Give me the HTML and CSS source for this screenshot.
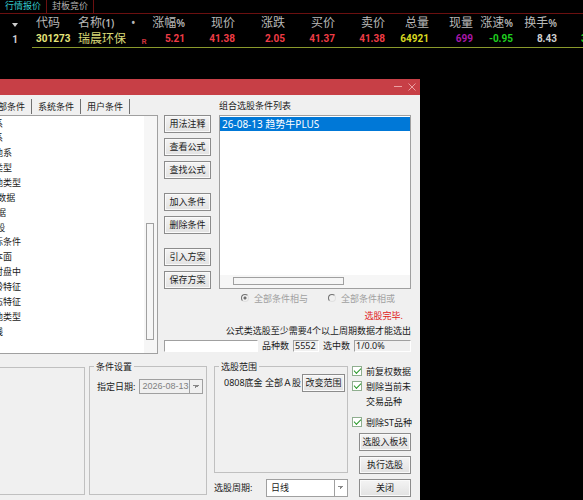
FILE: index.html
```html
<!DOCTYPE html>
<html lang="zh-CN">
<head>
  <meta charset="UTF-8" />
  <meta name="viewport" content="width=device-width, initial-scale=1.0" />
  <title>条件选股</title>
  <link rel="stylesheet" href="styles.css">
</head>
<body>
  <nav class="market-tabs">
    <a class="active" href="#">行情报价</a>
    <a href="#">封板竞价</a>
  </nav>

  <div class="quotes-wrap">
    <table class="quotes">
      <colgroup>
        <col class="c-gap"><col class="c-code"><col class="c-name"><col class="c-mark"><col class="c-pct">
        <col class="c-price"><col class="c-price"><col class="c-price"><col class="c-price">
        <col class="c-vol"><col class="c-vol"><col class="c-rate"><col class="c-vol"><col>
      </colgroup>
      <thead>
        <tr>
          <th class="idx"><svg width="6" height="4" viewBox="0 0 6 4"><path d="M0 0h6L3 4z" fill="#ccc"/></svg></th>
          <th class="left code">代码</th>
          <th class="left">名称<small>(1)</small></th>
          <th class="left">•</th>
          <th>涨幅<small>%</small></th>
          <th>现价</th>
          <th>涨跌</th>
          <th>买价</th>
          <th>卖价</th>
          <th>总量</th>
          <th>现量</th>
          <th>涨速<small>%</small></th>
          <th>换手<small>%</small></th>
          <th></th>
        </tr>
      </thead>
      <tbody>
        <tr>
          <td class="idx">1</td>
          <td class="left code yellow">301273</td>
          <td class="left name">瑞晨环保</td>
          <td class="mark">R</td>
          <td class="up">5.21</td>
          <td class="up">41.38</td>
          <td class="up">2.05</td>
          <td class="up">41.37</td>
          <td class="up">41.38</td>
          <td class="vol">64921</td>
          <td class="now">699</td>
          <td class="down">-0.95</td>
          <td>8.43</td>
          <td class="next down">3.27</td>
        </tr>
      </tbody>
    </table>
  </div>

  <main class="dialog">
    <header class="titlebar">
      <button type="button" aria-label="最小化"><svg width="8" height="8" viewBox="0 0 8 8"><path d="M0 3.5h8" stroke="#eba0a3"/></svg></button>
      <button type="button" aria-label="关闭窗口"><svg width="8" height="8" viewBox="0 0 8 8"><path d="M.5.5l7 7m0-7l-7 7" stroke="#eba0a3"/></svg></button>
    </header>

    <div class="upper">
      <section class="tree-pane">
        <div class="tabs">
          <button type="button">全部条件</button>
          <button type="button">系统条件</button>
          <button type="button">用户条件</button>
        </div>
        <div class="tree">
          <ul>
            <li>均系</li>
            <li>量系</li>
            <li>其他系</li>
            <li>形类型</li>
            <li>其他类型</li>
            <li>L2 数据</li>
            <li>I数据</li>
            <li>选 股</li>
            <li>指标条件</li>
            <li>基本面</li>
            <li>即时盘中</li>
            <li>年龄特征</li>
            <li>形态特征</li>
            <li>其他类型</li>
            <li>画线</li>
          </ul>
          <div class="track"><span class="thumb"></span></div>
        </div>
      </section>

      <section class="work-pane">
        <div class="work">
          <div class="actions">
            <div class="group">
              <button class="btn" type="button">用法注释</button>
              <button class="btn" type="button">查看公式</button>
              <button class="btn" type="button">查找公式</button>
            </div>
            <div class="group">
              <button class="btn" type="button">加入条件</button>
              <button class="btn" type="button">删除条件</button>
            </div>
            <div class="group">
              <button class="btn" type="button">引入方案</button>
              <button class="btn" type="button">保存方案</button>
            </div>
          </div>
          <div class="combo">
            <h2>组合选股条件列表</h2>
            <div class="combo-list">
              <ul>
                <li>26-08-13 趋势牛PLUS</li>
              </ul>
              <div class="track-h"><span class="thumb-h"></span></div>
            </div>
          </div>
        </div>
        <div class="radios">
          <label><input type="radio" name="logic" checked disabled>全部条件相与</label>
          <label><input type="radio" name="logic" disabled>全部条件相或</label>
        </div>
        <p class="done">选股完毕.</p>
        <p class="hint">公式类选股至少需要4个以上周期数据才能选出</p>
        <div class="counts">
          <input class="search" type="text" aria-label="条件">
          <label for="total">品种数</label>
          <input class="num" id="total" type="text" value="5552" readonly>
          <label for="hits">选中数</label>
          <input class="num wide" id="hits" type="text" value="1/0.0%" readonly>
        </div>
      </section>
    </div>

    <div class="lower">
      <div class="box blank"></div>
      <fieldset class="box settings">
        <legend>条件设置</legend>
        <div class="date-row">
          <label for="date">指定日期:</label>
          <select id="date" disabled><option>2026-08-13</option></select>
        </div>
      </fieldset>
      <div class="range-col">
        <fieldset class="box range">
          <legend>选股范围</legend>
          <div class="range-row">
            <span>0808底金 全部Ａ股</span>
            <button class="btn" type="button">改变范围</button>
          </div>
        </fieldset>
        <div class="period">
          <label for="period">选股周期:</label>
          <select id="period"><option>日线</option></select>
        </div>
      </div>
      <div class="options">
        <label><input type="checkbox" checked>前复权数据</label>
        <label><input type="checkbox" checked>剔除当前未<br>交易品种</label>
        <label class="st"><input type="checkbox" checked>剔除ST品种</label>
        <div class="group">
          <button class="btn" type="button">选股入板块</button>
          <button class="btn" type="button">执行选股</button>
          <button class="btn" type="button">关闭</button>
        </div>
      </div>
    </div>
  </main>
</body>
</html>
```
FILE: styles.css
```css
:root {
  --ui: "Noto Sans", "Noto Sans CJK SC", sans-serif;
  --face: #f0f0f0;
  --line: #a0a0a0;
  --line-soft: #c0c0c0;
  --title: #c73f46;
}

* {
  box-sizing: border-box;
}

body {
  margin: 0;
  min-height: 100vh;
  display: flex;
  flex-direction: column;
  overflow: hidden;
  background: #000;
  color: #1a1a1a;
  font: 9px/15px var(--ui);
}

ul, p, h2 {
  margin: 0;
  padding: 0;
  list-style: none;
  font-size: 9px;
  font-weight: normal;
}

button, input, select {
  font: inherit;
  color: inherit;
  margin: 0;
}

/* quotes */
.market-tabs {
  display: flex;
  height: 14px;
  line-height: 12px;
  border-bottom: 1px solid #6b1010;
}

.market-tabs a {
  padding: 0 5px;
  border-right: 1px solid #6b1010;
  color: #b0b0b0;
  text-decoration: none;
}

.market-tabs .active {
  color: #3cc;
}

.quotes-wrap {
  overflow: hidden;
}

.quotes {
  width: 100%;
  min-width: 600px;
  table-layout: fixed;
  border-collapse: collapse;
  color: #d0d0d0;
}

.c-gap { width: 32px; }
.c-code { width: 46px; }
.c-name { width: 53px; }
.c-mark { width: 18px; }
.c-pct { width: 36px; }
.c-price { width: 50px; }
.c-vol { width: 44px; }
.c-rate { width: 40px; }

.quotes th, .quotes td {
  padding: 0;
  text-align: right;
  white-space: nowrap;
}

.quotes th {
  height: 16px;
  font: 12px/18px var(--ui);
  color: #b8b8b8;
}

.quotes td {
  height: 15px;
  font: bold 10px/14px Roboto, "Noto Sans CJK SC", sans-serif;
  border-bottom: 1px solid #8a9a2c;
}

.quotes small {
  font-size: 10px;
  font-weight: 600;
}

.quotes .left {
  text-align: left;
}

.quotes .code {
  padding-left: 4px;
}

.quotes .idx {
  padding-right: 2px;
  text-align: center;
  border-bottom: 0;
}

.quotes .yellow { color: #e6e67a; }
.quotes .name { color: #d8d878; font-size: 12px; font-weight: normal; }
.quotes .up { color: #f03c46; }
.quotes .down { color: #1fd01f; }
.quotes .vol { color: #d8d820; }
.quotes .now { color: #a818a8; }
.quotes .mark { padding-left: 8px; color: #c8323c; font-size: 8px; text-align: center; vertical-align: bottom; line-height: 10px; }
.quotes .next { padding-left: 24px; text-align: left; }

/* dialog */
.dialog {
  flex: 1;
  display: flex;
  flex-direction: column;
  margin: 31px 163px 0 0;
  background: var(--face);
}

.titlebar {
  display: flex;
  justify-content: flex-end;
  gap: 6px;
  height: 16px;
  padding-right: 4px;
  background: var(--title);
}

.titlebar button {
  display: flex;
  align-items: center;
  padding: 0;
  border: 0;
  background: none;
}

.btn {
  height: 18px;
  padding: 0;
  line-height: 14px;
  white-space: nowrap;
  border: 1px solid #8c8c8c;
  background: linear-gradient(#f4f4f4, #e2e2e2);
  box-shadow: inset 0 0 0 1px #fafafa;
}

.group {
  display: flex;
  flex-direction: column;
  gap: 5px;
}

.upper {
  display: flex;
  gap: 6px;
  padding-right: 9px;
}

.tree-pane {
  flex: 1;
  display: flex;
  flex-direction: column;
}

.tabs {
  display: flex;
  height: 20px;
  margin-left: -17px;
}

.tabs button {
  height: 15px;
  margin-top: 4px;
  padding: 0 6px;
  line-height: 15px;
  border: 0;
  border-right: 1px solid #707070;
  background: none;
  white-space: nowrap;
}

.tree {
  flex: 1;
  display: flex;
  border: 1px solid var(--line);
  border-left: 0;
  background: #fff;
}

.tree ul {
  flex: 1;
  display: flex;
  flex-direction: column;
  margin-left: -15px;
  padding: 1px 0 13px;
}

.tree li {
  flex: 1;
  line-height: 14px;
  white-space: nowrap;
}

.track {
  width: 13px;
  padding: 107px 3px 0 2px;
  background: #f6f6f6;
}

.thumb {
  display: block;
  height: 117px;
  border: 1px solid var(--line);
  background: #f6f6f6;
}

.work-pane {
  width: 247px;
}

.work {
  display: flex;
  gap: 8px;
}

.actions {
  display: flex;
  flex-direction: column;
  gap: 14px;
  width: 47px;
  padding-top: 20px;
}

.combo {
  flex: 1;
  display: flex;
  flex-direction: column;
}

.combo h2 {
  height: 20px;
  line-height: 22px;
}

.combo-list {
  flex: 1;
  display: flex;
  flex-direction: column;
  justify-content: space-between;
  border: 1px solid var(--line);
  background: #fff;
}

.combo-list li {
  margin-top: 1px;
  padding-left: 2px;
  font-size: 10px;
  line-height: 14px;
  background: #0078d7;
  color: #fff;
}

.track-h {
  height: 13px;
  padding: 2px 0 0 13px;
  background: #f6f6f6;
}

.thumb-h {
  display: block;
  width: 111px;
  height: 8px;
  border: 1px solid var(--line);
}

.radios {
  display: flex;
  justify-content: flex-end;
  gap: 20px;
  height: 19px;
  padding-right: 16px;
  color: #a0a0a0;
}

.radios label {
  display: flex;
  align-items: center;
  gap: 5px;
}

.radios input {
  appearance: none;
  width: 8px;
  height: 8px;
  border: 1px solid #e0e0e0;
  border-top-color: #707070;
  border-left-color: #707070;
  border-radius: 50%;
}

.radios input:checked {
  background: radial-gradient(circle, #707070 0 1px, transparent 2px);
}

.done {
  padding-right: 8px;
  text-align: right;
  color: #e02020;
}

.hint {
  text-align: right;
}

.counts {
  display: flex;
  align-items: center;
  gap: 4px;
  height: 16px;
}

.counts input {
  height: 12px;
  padding: 0 1px;
  line-height: 11px;
  border: 1px solid var(--line);
  border-right-color: #fff;
  border-bottom-color: #fff;
  background: var(--face);
}

.counts .search {
  flex: 1;
  min-width: 0;
  background: #fff;
}

.counts .num {
  width: 26px;
}

.counts .wide {
  width: 57px;
}

/* lower boxes */
.lower {
  flex: 1;
  display: flex;
  padding: 6px 9px 4px 0;
}

.box {
  min-width: 0;
  margin: 0;
  border: 1px solid var(--line-soft);
}

legend {
  margin-left: 4px;
  padding: 0 2px;
  line-height: 14px;
}

.blank {
  flex: 1;
  margin: 7px 4px 2px 0;
  border-left: 0;
}

.settings {
  width: 118px;
  margin: 0 7px 2px 0;
  padding: 0;
}

.date-row {
  display: flex;
  align-items: center;
  gap: 4px;
  padding: 5px 0 0 7px;
}

.date-row label {
  white-space: nowrap;
}

/* divider line and a small down arrow made of two triangles */
select {
  appearance: none;
  border: 1px solid var(--line);
  border-radius: 0;
  background-color: #fff;
  background-image:
    linear-gradient(var(--line), var(--line)),
    linear-gradient(to bottom left, #888 50%, transparent 50%),
    linear-gradient(to bottom right, #888 50%, transparent 50%);
  background-repeat: no-repeat;
  background-size: 1px 100%, 3px 3px, 3px 3px;
  background-position: right 12px top 0, right 6px center, right 3px center;
}

.date-row select {
  width: 64px;
  height: 15px;
  padding: 0 2px;
  font: 9px/13px "Liberation Sans", sans-serif;
  color: #808080;
  opacity: 1;
  background-color: var(--face);
}

.range-col {
  width: 134px;
  display: flex;
  flex-direction: column;
}

.range {
  flex: 1;
  padding: 0;
}

.range-row {
  display: flex;
  justify-content: space-between;
  padding: 0 2px 0 9px;
  line-height: 18px;
  white-space: nowrap;
}

.range-row .btn {
  width: 43px;
}

.period {
  display: flex;
  justify-content: space-between;
  align-items: center;
  padding-top: 6px;
}

.period select {
  width: 82px;
  height: 18px;
  padding: 0 4px;
}

.options {
  width: 59px;
  margin-left: 4px;
  padding-top: 4px;
}

.options label {
  display: flex;
  gap: 4px;
  white-space: nowrap;
}

.options .st {
  margin: 6px 0 3px;
}

.options input {
  appearance: none;
  flex: none;
  width: 10px;
  height: 10px;
  margin-top: 2px;
  border: 1px solid #8fae8f;
  background: #fff;
  display: grid;
  place-items: center;
}

.options input:checked::before {
  content: "";
  width: 6px;
  height: 3px;
  margin-bottom: 1px;
  border: solid #2a9a2a;
  border-width: 0 0 1px 1px;
  transform: rotate(-45deg);
}

.options .group {
  padding-left: 7px;
}
```
